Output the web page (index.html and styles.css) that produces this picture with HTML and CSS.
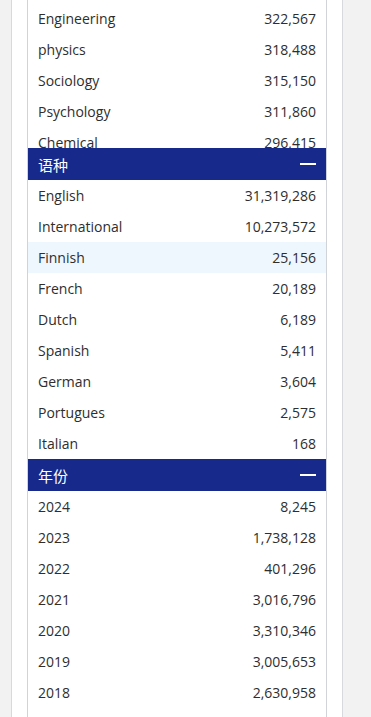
FILE: index.html
```html
<!DOCTYPE html>
<html lang="zh">
<head>
<meta charset="utf-8">
<link rel="stylesheet" href="styles.css">
</head>
<body>
<div class="page">
  <div class="column">
    <div class="panel">
      <div class="clip">
        <ul class="list">
          <li class="row"><span>Engineering</span><span>322,567</span></li>
          <li class="row"><span>physics</span><span>318,488</span></li>
          <li class="row"><span>Sociology</span><span>315,150</span></li>
          <li class="row"><span>Psychology</span><span>311,860</span></li>
          <li class="row"><span>Chemical</span><span>296,415</span></li>
        </ul>
      </div>
      <div class="head"><span>语种</span><i class="minus"></i></div>
      <ul class="list">
        <li class="row"><span>English</span><span>31,319,286</span></li>
        <li class="row"><span>International</span><span>10,273,572</span></li>
        <li class="row hl"><span>Finnish</span><span>25,156</span></li>
        <li class="row"><span>French</span><span>20,189</span></li>
        <li class="row"><span>Dutch</span><span>6,189</span></li>
        <li class="row"><span>Spanish</span><span>5,411</span></li>
        <li class="row"><span>German</span><span>3,604</span></li>
        <li class="row"><span>Portugues</span><span>2,575</span></li>
        <li class="row"><span>Italian</span><span>168</span></li>
      </ul>
      <div class="head"><span>年份</span><i class="minus"></i></div>
      <ul class="list">
        <li class="row"><span>2024</span><span>8,245</span></li>
        <li class="row"><span>2023</span><span>1,738,128</span></li>
        <li class="row"><span>2022</span><span>401,296</span></li>
        <li class="row"><span>2021</span><span>3,016,796</span></li>
        <li class="row"><span>2020</span><span>3,310,346</span></li>
        <li class="row"><span>2019</span><span>3,005,653</span></li>
        <li class="row"><span>2018</span><span>2,630,958</span></li>
      </ul>
    </div>
  </div>
</div>
</body>
</html>
```
FILE: styles.css
```css
html, body {
  margin: 0;
  padding: 0;
  height: 717px;
  overflow: hidden;
  background: #f2f2f2;
}
body {
  font-family: "Open Sans", "Noto Sans CJK SC", sans-serif;
  font-size: 14px;
  color: #2e2e2e;
}
.page {
  padding-left: 11px;
  width: 332px;
}
.column {
  background: #fff;
  border-left: 1px solid #d6d9de;
  border-right: 1px solid #d6d9de;
  padding: 0 15px;
  height: 717px;
}
.panel {
  border-left: 1px solid #d0d4da;
  border-right: 1px solid #d0d4da;
  height: 717px;
}
.clip {
  height: 148px;
  overflow: hidden;
  padding-top: 3px;
  box-sizing: border-box;
}
.list {
  list-style: none;
  margin: 0;
  padding: 0;
}
.row {
  display: flex;
  justify-content: space-between;
  align-items: center;
  height: 31px;
  padding: 0 10px 0 10px;
}
.row.hl {
  background: #eef6fe;
}
.head {
  display: flex;
  justify-content: space-between;
  align-items: center;
  height: 32px;
  background: #17298a;
  color: #fff;
  padding: 0 10px;
  font-family: "Noto Sans CJK SC", sans-serif;
  font-size: 15px;
  font-weight: 400;
}
.minus {
  display: block;
  width: 16px;
  height: 2px;
  background: #fff;
}
```
